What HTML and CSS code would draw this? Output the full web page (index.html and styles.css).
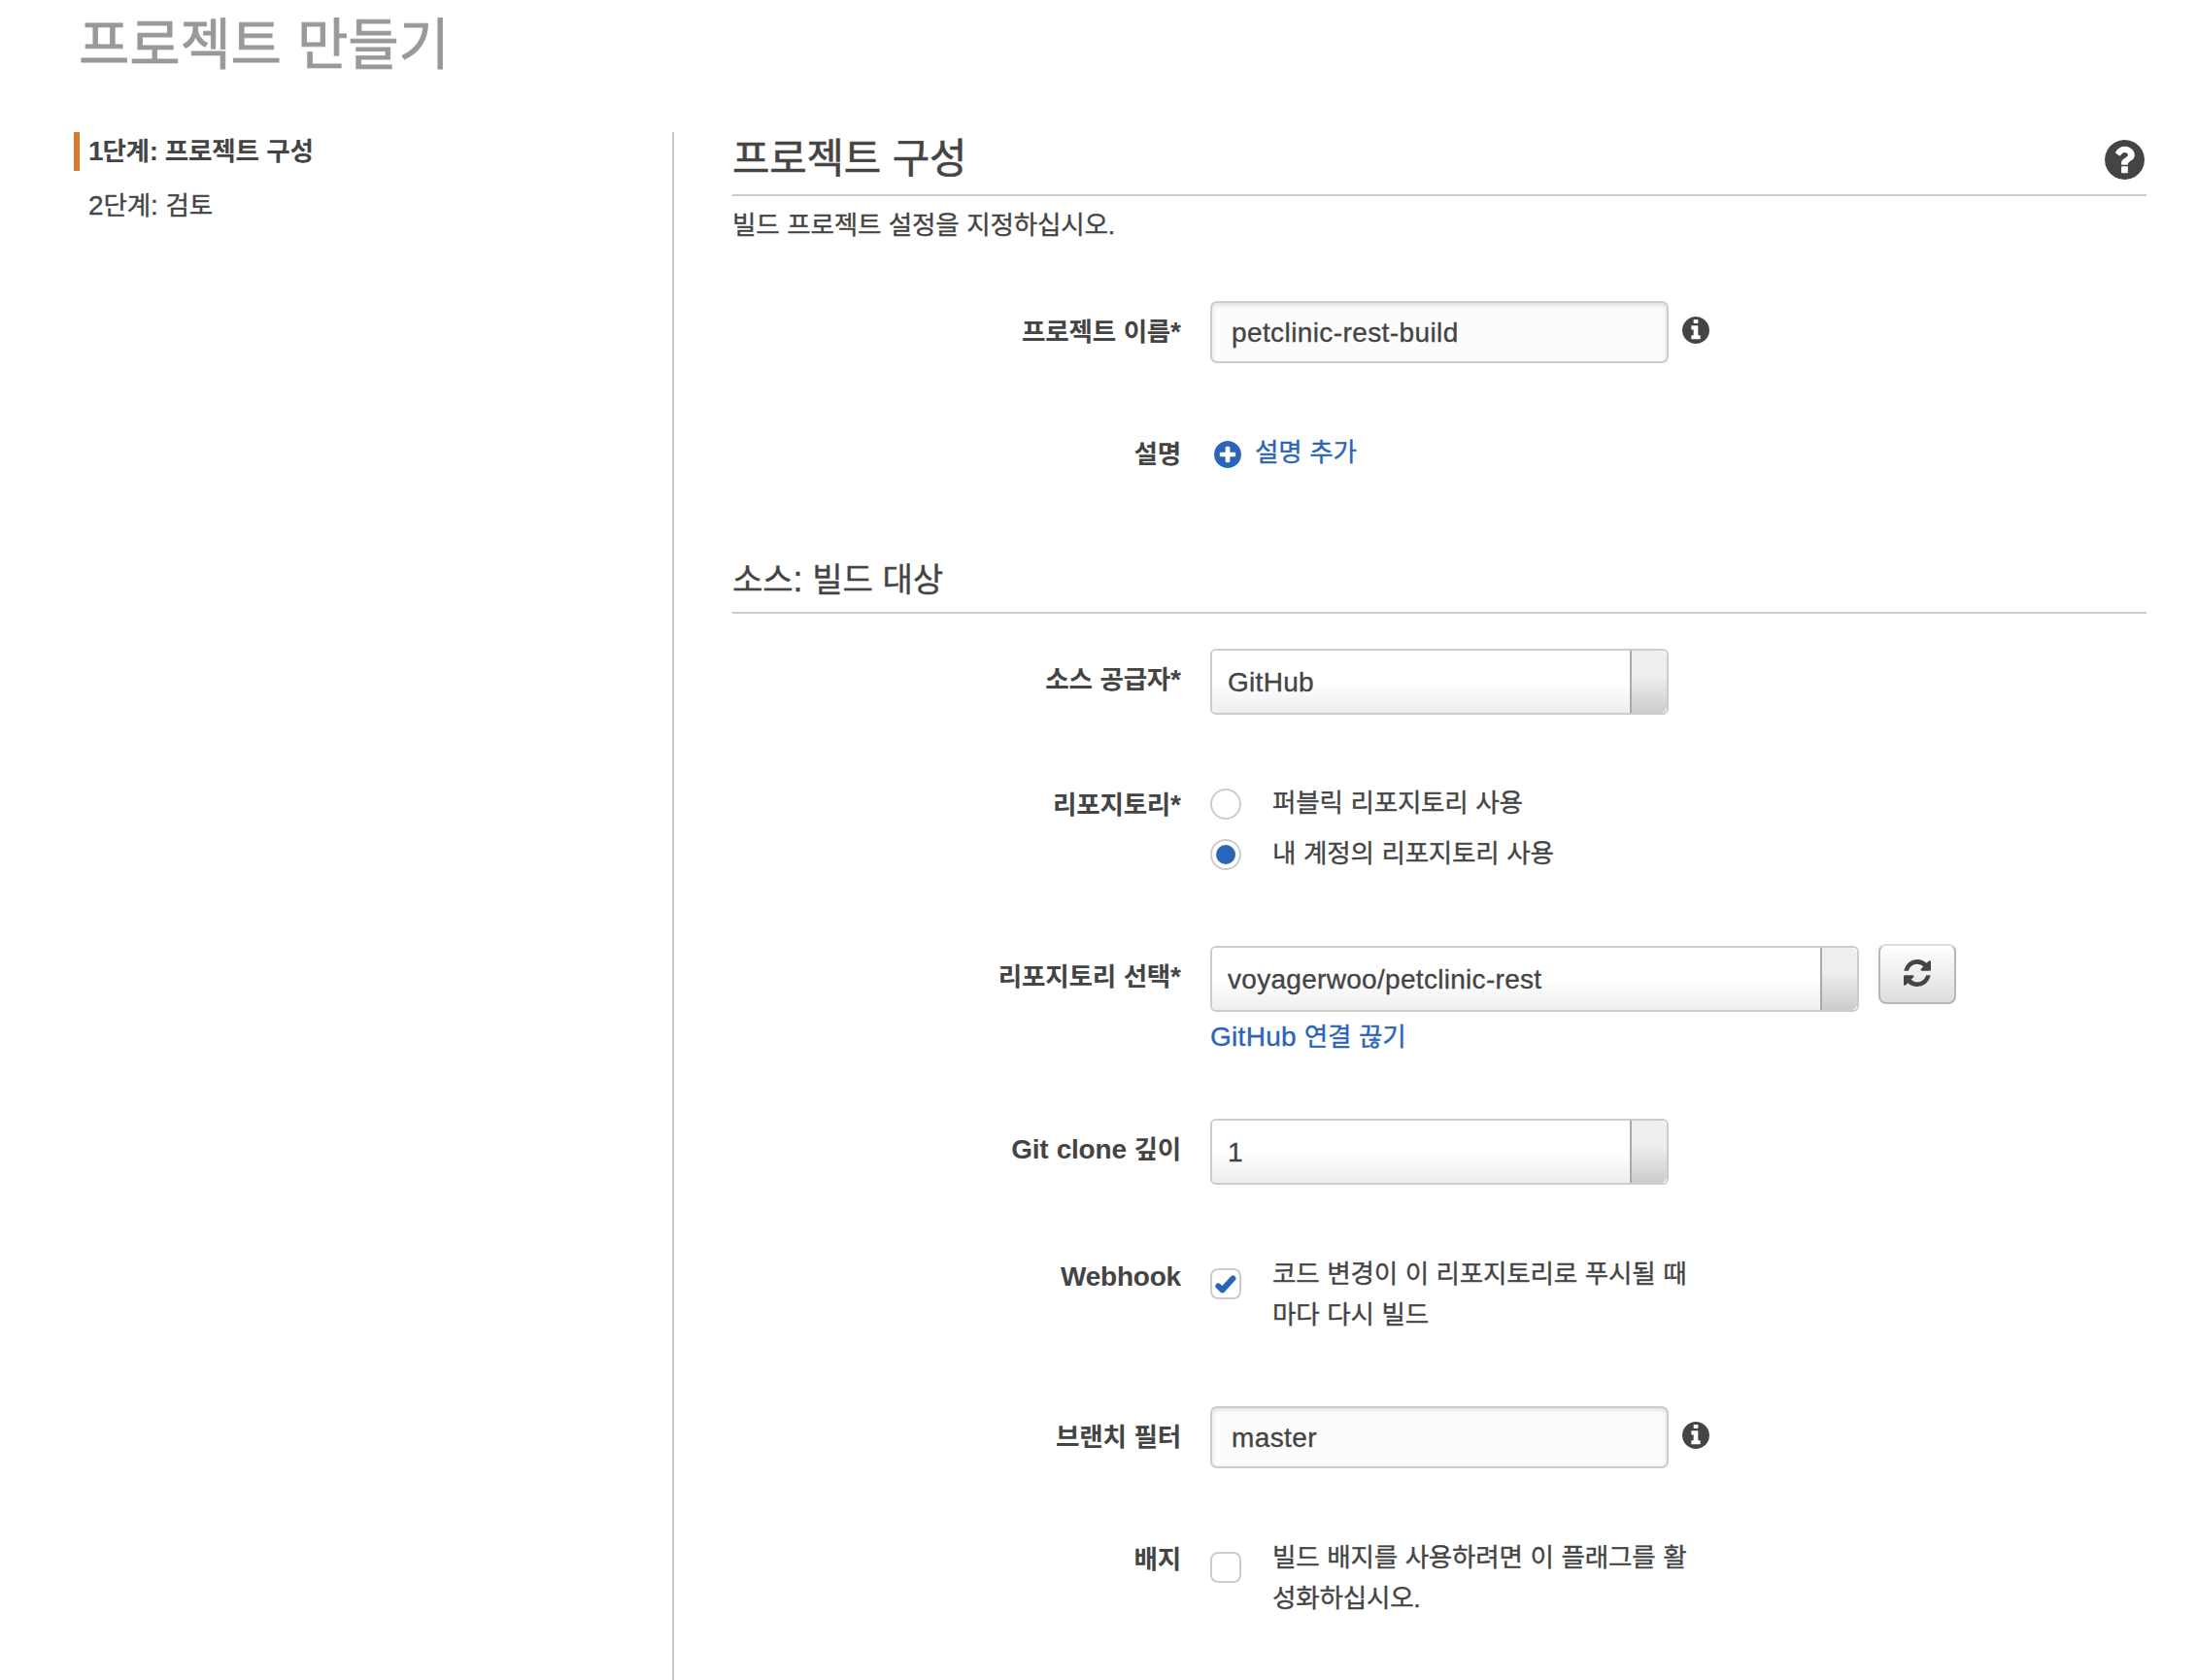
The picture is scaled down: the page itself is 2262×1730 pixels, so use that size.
FILE: index.html
```html
<!DOCTYPE html>
<html lang="ko">
<head>
<meta charset="utf-8">
<title>프로젝트 만들기</title>
<link rel="stylesheet" href="styles.css">
</head>
<body>
<svg class="sprite" width="0" height="0">
  <symbol id="i-help" viewBox="128 128 1536 1536"><path d="M1024 1376v-192q0-14-9-23t-23-9h-192q-14 0-23 9t-9 23v192q0 14 9 23t23 9h192q14 0 23-9t9-23zm256-672q0-88-55.5-163t-138.5-116-170-41q-243 0-371 213-15 24 8 42l132 100q7 6 19 6 16 0 25-12 53-68 86-92 34-24 86-24 48 0 85.5 26t37.5 59q0 38-20 61t-68 45q-63 28-115.500 86.500t-52.500 125.500v36q0 14 9 23t23 9h192q14 0 23-9t9-23q0-19 21.500-49.500t54.500-49.500q32-18 49-28.500t46-35 44.500-48 28-60.500 12.500-81zm384 192q0 209-103 385.500t-279.500 279.500-385.500 103-385.500-103-279.500-279.500-103-385.500 103-385.500 279.500-279.500 385.500-103 385.500 103 279.500 279.500 103 385.500z"/></symbol>
  <symbol id="i-info" viewBox="128 128 1536 1536"><path d="M1152 1376v-160q0-14-9-23t-23-9h-96v-512q0-14-9-23t-23-9h-320q-14 0-23 9t-9 23v160q0 14 9 23t23 9h96v320h-96q-14 0-23 9t-9 23v160q0 14 9 23t23 9h448q14 0 23-9t9-23zm-128-896v-160q0-14-9-23t-23-9h-192q-14 0-23 9t-9 23v160q0 14 9 23t23 9h192q14 0 23-9t9-23zm640 416q0 209-103 385.500t-279.500 279.500-385.500 103-385.500-103-279.500-279.500-103-385.500 103-385.500 279.500-279.500 385.500-103 385.500 103 279.500 279.500 103 385.500z"/></symbol>
  <symbol id="i-plus" viewBox="128 128 1536 1536"><path d="M1344 960v-128q0-26-19-45t-45-19h-256v-256q0-26-19-45t-45-19h-128q-26 0-45 19t-19 45v256h-256q-26 0-45 19t-19 45v128q0 26 19 45t45 19h256v256q0 26 19 45t45 19h128q26 0 45-19t19-45v-256h256q26 0 45-19t19-45zm320-64q0 209-103 385.500t-279.500 279.500-385.500 103-385.500-103-279.500-279.500-103-385.500 103-385.500 279.500-279.500 385.500-103 385.500 103 279.500 279.500 103 385.500z"/></symbol>
  <symbol id="i-refresh" viewBox="128 128 1536 1536"><path d="M1639 1056q0 5-1 7-64 268-268 434.500t-478 166.500q-146 0-282.500-55t-243.500-157l-129 129q-19 19-45 19t-45-19-19-45v-448q0-26 19-45t45-19h448q26 0 45 19t19 45-19 45l-137 137q71 66 161 102t187 36q134 0 250-65t186-179q11-17 53-117 8-23 30-23h192q13 0 22.500 9.500t9.500 22.500zm25-800v448q0 26-19 45t-45 19h-448q-26 0-45-19t-19-45 19-45l138-138q-148-137-349-137-134 0-250 65t-186 179q-11 17-53 117-8 23-30 23h-199q-13 0-22.500-9.500t-9.500-22.500v-7q65-268 270-434.500t480-166.500q146 0 284 55.500t245 156.500l130-129q19-19 45-19t45 19 19 45z"/></symbol>
</svg>

<header class="page-header"><h1>프로젝트 만들기</h1></header>

<div class="wizard">
  <nav class="steps">
    <a class="step active"><span class="lat">1</span>단계<span class="lat">:</span> 프로젝트 구성</a>
    <a class="step"><span class="lat">2</span>단계<span class="lat">:</span> 검토</a>
  </nav>

  <main class="content">
    <div class="section-head">
      <h2>프로젝트 구성</h2>
      <svg class="help"><use href="#i-help"/></svg>
    </div>
    <p class="lead">빌드 프로젝트 설정을 지정하십시오.</p>

    <div class="row name">
      <label class="label">프로젝트 이름<span class="lat">*</span></label>
      <div class="control">
        <div class="input">petclinic-rest-build</div>
        <svg class="info"><use href="#i-info"/></svg>
      </div>
    </div>

    <div class="row desc">
      <label class="label">설명</label>
      <div class="control"><a class="add"><svg class="plus"><use href="#i-plus"/></svg>설명 추가</a></div>
    </div>

    <h3>소스<span class="lat">:</span> 빌드 대상</h3>

    <div class="row provider">
      <label class="label">소스 공급자<span class="lat">*</span></label>
      <div class="control"><div class="select"><span class="value">GitHub</span><span class="handle"></span></div></div>
    </div>

    <div class="row repo">
      <label class="label">리포지토리<span class="lat">*</span></label>
      <div class="options">
        <div class="option"><span class="radio"></span>퍼블릭 리포지토리 사용</div>
        <div class="option"><span class="radio checked"></span>내 계정의 리포지토리 사용</div>
      </div>
    </div>

    <div class="row pick">
      <label class="label">리포지토리 선택<span class="lat">*</span></label>
      <div>
        <div class="control">
          <div class="select wide"><span class="value">voyagerwoo/petclinic-rest</span><span class="handle"></span></div>
          <div class="button"><svg class="refresh"><use href="#i-refresh"/></svg></div>
        </div>
        <a class="disconnect"><span class="lat">GitHub</span> 연결 끊기</a>
      </div>
    </div>

    <div class="row depth">
      <label class="label"><span class="lat">Git clone</span> 깊이</label>
      <div class="control"><div class="select"><span class="value">1</span><span class="handle"></span></div></div>
    </div>

    <div class="row webhook">
      <label class="label"><span class="lat">Webhook</span></label>
      <div class="check-line">
        <span class="checkbox"><svg class="tick" viewBox="0 0 28 28"><path d="M6.400 16.400L10.500 20.400L21.400 8.500"/></svg></span>
        <span>코드 변경이 이 리포지토리로 푸시될 때<br>마다 다시 빌드</span>
      </div>
    </div>

    <div class="row branch">
      <label class="label">브랜치 필터</label>
      <div class="control">
        <div class="input">master</div>
        <svg class="info"><use href="#i-info"/></svg>
      </div>
    </div>

    <div class="row badge">
      <label class="label">배지</label>
      <div class="check-line">
        <span class="checkbox"></span>
        <span>빌드 배지를 사용하려면 이 플래그를 활<br>성화하십시오.</span>
      </div>
    </div>
  </main>
</div>
</body>
</html>
```
FILE: styles.css
```css
* { box-sizing: border-box; }

body {
  margin: 0;
  height: 1730px;
  overflow: hidden;
  display: flex;
  flex-direction: column;
  background: #fff;
  color: #444;
  font-family: "Liberation Sans", "Noto Sans CJK KR", sans-serif;
  font-size: 26.6px;
  line-height: 42px;
  letter-spacing: -0.009em;
  word-spacing: 0.6px;
  -webkit-text-stroke: 0.35px currentColor;
}

h1, h2, h3, p { margin: 0; font-weight: 400; }
svg { display: block; fill: currentColor; flex: none; }
.sprite { position: absolute; }

/* Latin runs sit slightly larger next to Hangul */
.lat { font-size: 1.053em; line-height: 1; letter-spacing: 0; }

.page-header { flex: none; height: 136px; padding: 6px 0 0 81px; }
.page-header h1 { font-size: 57px; line-height: 80px; color: #999; -webkit-text-stroke-width: 0.8px; }

.wizard { flex: 1; display: flex; min-height: 0; }

.steps {
  width: 694px;
  padding-left: 76px;
  border-right: 2px solid #ccc;
  display: flex;
  flex-direction: column;
  gap: 16px;
}
.step { height: 40px; line-height: 40px; padding-left: 9px; border-left: 6px solid transparent; }
.step.active { border-left-color: #d67b2c; font-weight: 700; -webkit-text-stroke-width: 0; }
.step.active .lat { letter-spacing: -1.2px; }

.content { width: 1516px; padding-left: 60px; }

.section-head {
  height: 66px;
  display: flex;
  justify-content: space-between;
  border-bottom: 2px solid #ccc;
}
h2 { font-size: 41.8px; line-height: 56px; -webkit-text-stroke-width: 0.6px; }
.help { width: 41px; height: 41px; margin: 8px 2px 0 0; }
.lead { margin-top: 9px; }

h3 {
  margin-top: 83px;
  padding-bottom: 8px;
  border-bottom: 2px solid #ccc;
  font-size: 34.2px;
  line-height: 50px;
}

.row { display: grid; grid-template-columns: 462px 1fr; column-gap: 30px; align-items: start; }
.label { text-align: right; font-weight: 700; padding-top: 11px; -webkit-text-stroke-width: 0; }
.control { display: flex; align-items: flex-start; }

.name { margin-top: 57px; }
.desc { margin-top: 71px; }
.provider { margin-top: 36px; }
.repo { margin-top: 70px; }
.pick { margin-top: 62px; }
.depth { margin-top: 63px; }
.webhook { margin-top: 71px; }
.branch { margin-top: 73px; }
.badge { margin-top: 71px; }

.desc .label, .repo .label, .badge .label { padding-top: 2px; }
.webhook .label { padding-top: 3px; }
.depth .lat, .webhook .lat { letter-spacing: -0.2px; }
.pick .label { padding-top: 13px; }

.input {
  width: 472px;
  height: 64px;
  padding: 0 20px;
  border: 2px solid #ccc;
  border-radius: 7px;
  background: #fcfcfc;
  box-shadow: inset 0 2px 5px rgba(0, 0, 0, 0.12);
  font-size: 28px;
  line-height: 61px;
  letter-spacing: 0.4px;
}
.info { width: 28px; height: 28px; margin: 16px 0 0 14px; }

.add { display: flex; color: #2a65b8; }
.plus { width: 28px; height: 28px; margin: 9px 14px 0 4px; }

.select {
  width: 472px;
  height: 68px;
  display: flex;
  border: 2px solid #ccc;
  border-radius: 6px;
  background: #fff;
  font-size: 28px;
  line-height: 65px;
  letter-spacing: 0.3px;
}
.select.wide { width: 668px; margin-top: 2px; }
.value {
  flex: 1;
  padding-left: 16px;
  border-radius: 4px 0 0 4px;
  background: linear-gradient(#fff 50%, #eee);
}
.handle {
  width: 38px;
  border-left: 2px solid #aaa;
  border-radius: 0 6px 6px 0;
  background: linear-gradient(#eee 40%, #ccc);
}

.options { display: flex; flex-direction: column; }
.option { display: flex; height: 52px; }
.radio {
  width: 32px;
  height: 32px;
  margin: 6px 32px 0 0;
  padding: 4px;
  border: 2px solid #ccc;
  border-radius: 50%;
}
.radio.checked { background: #2a65b8 content-box; }

.button {
  width: 80px;
  height: 62px;
  margin-left: 20px;
  display: flex;
  align-items: center;
  justify-content: center;
  padding-bottom: 2px;
  border: 2px solid #b7b7b7;
  border-top-color: #ddd;
  border-radius: 8px;
  background: linear-gradient(#fff, #ddd);
}
.refresh { width: 28px; height: 28px; }
.disconnect { display: block; margin-top: 5px; color: #2a65b8; }
.disconnect .lat { letter-spacing: 0.3px; }

.check-line { display: flex; }
.checkbox {
  width: 32px;
  height: 32px;
  margin: 15px 32px 0 0;
  border: 2px solid #ccc;
  border-radius: 8px;
}
.tick { width: 28px; height: 28px; fill: none; stroke: #2a65b8; stroke-width: 6; stroke-linecap: round; stroke-linejoin: round; }
```
